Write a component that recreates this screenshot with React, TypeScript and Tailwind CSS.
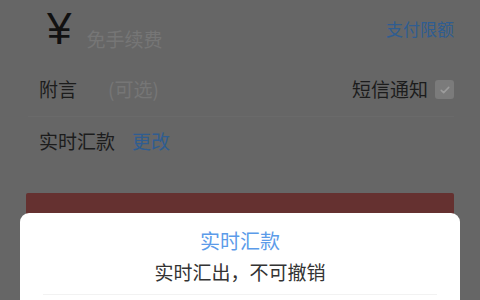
export default function App() {
  const cjk = { fontFamily: '"Noto Sans CJK SC", "Noto Sans", sans-serif' };
  return (
    <div className="relative h-[300px] w-[480px] overflow-hidden bg-[#666666]" style={cjk}>
      {/* 金额 */}
      <div className="flex h-[62px] items-start pl-[47px] pr-[26px]">
        <span className="mt-[7px] text-[44px] leading-none text-[#111111] [font-family:'Liberation_Sans',sans-serif]">
          ¥
        </span>
        <span className="ml-[15px] mt-[29px] text-[19px] leading-none text-[#767676]">免手续费</span>
        <div className="flex-1" />
        <span className="mt-[20px] text-[17px] leading-none text-[#2f5d91]">支付限额</span>
      </div>

      {/* 附言 */}
      <div className="ml-[28px] mr-[26px] flex h-[55px] items-start border-b border-[#6a6a6a] pl-[11px] pt-[17px]">
        <span className="text-[19px] leading-none text-[#1c1c1c]">附言</span>
        <span className="ml-[31px] text-[19px] leading-none text-[#767676]">(可选)</span>
        <div className="flex-1" />
        <span className="text-[19px] leading-none text-[#1c1c1c]">短信通知</span>
        <span className="ml-[7px] mt-[1px] flex h-[19px] w-[19px] items-center justify-center rounded-[3px] bg-[#7b7b7b]">
          <svg viewBox="0 0 16 16" className="h-[12px] w-[12px]" fill="none" stroke="#9c9c9c" strokeWidth="2" strokeLinecap="round" strokeLinejoin="round">
            <path d="M3 8.5l3.2 3L13 4.5" />
          </svg>
        </span>
      </div>

      {/* 汇款方式 */}
      <div className="flex items-start pl-[39px] pt-[14px]">
        <span className="text-[19px] leading-none text-[#1c1c1c]">实时汇款</span>
        <span className="ml-[17px] text-[19px] leading-none text-[#2f5d91]">更改</span>
      </div>

      {/* 下一步按钮 */}
      <div className="ml-[26px] mt-[43px] h-[60px] w-[428px] rounded-t-[2px] bg-[#653130]" />

      {/* 弹窗 */}
      <div className="absolute left-[20px] top-[213px] h-[120px] w-[440px] rounded-t-[9px] bg-white text-center">
        <div className="pt-[18px] text-[20px] leading-none text-[#5b9be9]">实时汇款</div>
        <div className="mt-[11px] text-[19px] leading-none text-[#333333]">实时汇出，不可撤销</div>
        <div className="mx-[23px] mt-[13px] border-b border-[#f2f2f2]" />
      </div>
    </div>
  );
}
